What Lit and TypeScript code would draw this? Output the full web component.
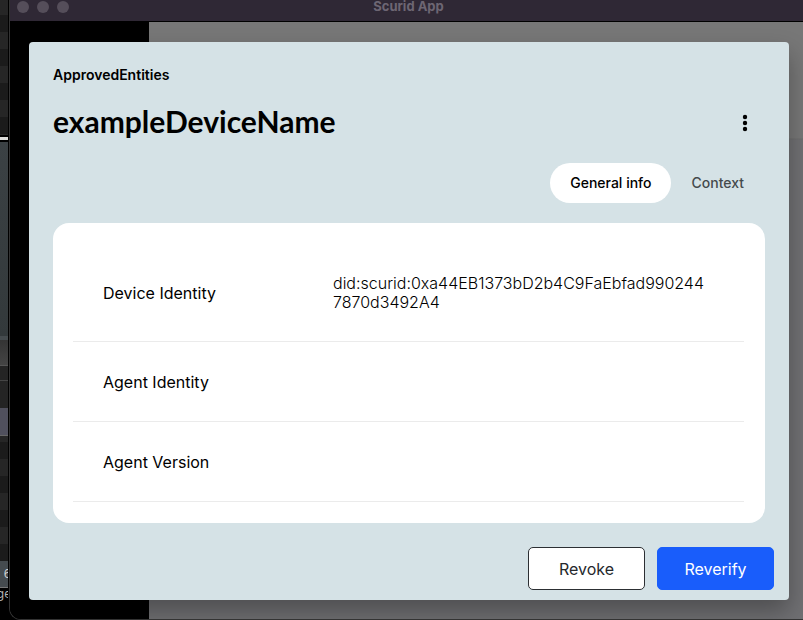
import { LitElement, html, css } from "lit";
import { customElement, property, state } from "lit/decorators.js";
import { classMap } from "lit/directives/class-map.js";

interface Detail {
  label: string;
  value: string;
}

@customElement("desktop-edge")
class DesktopEdge extends LitElement {
  static styles = css`
    :host {
      display: flex;
      flex-direction: column;
      overflow: hidden;
      background: #000;
      color: #b4b4b4;
      font: 12px/16px Inter, sans-serif;
    }
    .list {
      background: linear-gradient(#262626 17px, #1b1b1b 17px);
      background-size: 100% 34px;
    }
    .top {
      height: 135px;
      background-position: 0 -2px;
    }
    .line {
      height: 3px;
      margin-top: 2px;
      background: #dcdcda;
    }
    .slate {
      height: 194px;
      margin-top: 2px;
      background: linear-gradient(#3b4144, #33393b);
    }
    .bar {
      height: 4px;
      background: #454b4e;
    }
    .fade {
      height: 25px;
      background: linear-gradient(#343434, #444);
      border-bottom: 1px solid #555;
    }
    .gap {
      height: 14px;
      background: #242424;
      border-bottom: 1px solid #454545;
    }
    .plain {
      height: 27px;
      background: #242424;
    }
    .selected {
      height: 27px;
      background: #50505d;
      border-bottom: 1px solid #666;
    }
    .bottom {
      flex: 1;
      background-position: 0 -11px;
    }
    .status {
      height: 26px;
      line-height: 26px;
      background: #454b4f;
      color: #d0d0d0;
      border-bottom: 1px solid #777;
    }
    .status,
    .word {
      display: flex;
      justify-content: center;
      white-space: pre;
    }
    .word {
      height: 32px;
      line-height: 12px;
    }
  `;

  render() {
    return html`
      <div class="list top"></div>
      <div class="line"></div>
      <div class="slate"></div>
      <div class="bar"></div>
      <div class="fade"></div>
      <div class="gap"></div>
      <div class="plain"></div>
      <div class="selected"></div>
      <div class="list bottom"></div>
      <div class="status">: 6</div>
      <div class="word">ge</div>
    `;
  }
}

@customElement("entity-dialog")
class EntityDialog extends LitElement {
  @property() heading = "";
  @property() category = "";
  @property({ attribute: false }) details: Detail[] = [];
  @state() private tab = "General info";

  static styles = css`
    :host {
      display: flex;
      flex-direction: column;
      box-sizing: border-box;
      background: #d5e2e6;
      border-radius: 4px;
      box-shadow: 0 12px 24px rgba(0, 0, 0, 0.3);
      color: #000;
      font-family: Inter, sans-serif;
      font-size: 16px;
      line-height: 19px;
    }
    button {
      font: inherit;
      color: inherit;
      border: 0;
      margin: 0;
      cursor: pointer;
    }
    .head {
      padding: 24px 24px 20px;
    }
    .category {
      margin: 0;
      font-size: 14px;
      line-height: 18px;
      font-weight: 600;
    }
    .title {
      display: flex;
      align-items: flex-start;
      justify-content: space-between;
      margin: 19px 0 20px;
    }
    h1 {
      margin: 0;
      font: 700 30px/36px Lato, sans-serif;
    }
    .menu {
      display: flex;
      justify-content: center;
      width: 40px;
      padding: 8px 0;
      background: none;
    }
    .menu svg {
      width: 24px;
      height: 24px;
    }
    .tabs {
      display: flex;
      justify-content: flex-end;
      padding-right: 1px;
    }
    .tab {
      height: 40px;
      padding: 0 20px 2px;
      border-radius: 20px;
      background: none;
      color: #444a4c;
      font-size: 14px;
      font-weight: 500;
    }
    .tab.active {
      background: #fff;
      color: #000;
    }
    .card {
      flex: 1;
      margin: 0 24px;
      padding: 20px 21px 20px 20px;
      border-radius: 16px;
      background: #fff;
    }
    table {
      width: 100%;
      border-collapse: separate;
      border-spacing: 0;
      table-layout: fixed;
    }
    th,
    td {
      height: 19px;
      padding: 31px 30px 29px;
      border-bottom: 1px solid #ebebeb;
      text-align: left;
      vertical-align: middle;
    }
    th {
      width: 200px;
      padding-right: 0;
      font-weight: 400;
    }
    td {
      padding-right: 36px;
      font-weight: 300;
      word-break: break-all;
    }
    .actions {
      display: flex;
      justify-content: flex-end;
      gap: 12px;
      padding: 24px 15px 10px;
    }
    .action {
      padding: 12px 26px 10px;
      border: 1px solid #2c2f33;
      border-radius: 5px;
      background: #fff;
      color: #25282c;
      min-width: 117px;
    }
    .action.primary {
      border-color: #195dfb;
      background: #195dfb;
      color: #fff;
    }
  `;

  private renderTab(name: string) {
    const active = this.tab === name;
    return html`<button
      class=${classMap({ tab: true, active })}
      role="tab"
      aria-selected=${active}
      @click=${() => (this.tab = name)}
    >${name}</button>`;
  }

  render() {
    return html`
      <header class="head">
        <p class="category">${this.category}</p>
        <div class="title">
          <h1>${this.heading}</h1>
          <button class="menu" aria-label="More options">
            <svg viewBox="0 0 24 24" aria-hidden="true">
              <circle cx="12" cy="6" r="2.2" />
              <circle cx="12" cy="12" r="2.2" />
              <circle cx="12" cy="18" r="2.2" />
            </svg>
          </button>
        </div>
        <div class="tabs" role="tablist">
          ${this.renderTab("General info")}${this.renderTab("Context")}
        </div>
      </header>
      <section class="card">
        <table>
          <tbody>
            ${this.details.map(
              (d) => html`<tr>
                <th scope="row">${d.label}</th>
                <td>${d.value}</td>
              </tr>`
            )}
          </tbody>
        </table>
      </section>
      <footer class="actions">
        <button class="action">Revoke</button>
        <button class="action primary">Reverify</button>
      </footer>
    `;
  }
}

@customElement("app-root")
class AppRoot extends LitElement {
  static styles = css`
    :host {
      display: grid;
      grid-template-columns: 8px minmax(0, 1fr);
      min-height: 100vh;
      background: #000;
      font-family: Inter, sans-serif;
    }
    .window {
      display: flex;
      flex-direction: column;
      margin-left: 1px;
      border-left: 1px solid #333;
      border-bottom: 1px solid #333;
      border-bottom-left-radius: 12px;
      overflow: hidden;
    }
    .titlebar {
      display: grid;
      grid-template-columns: 1fr auto 1fr;
      height: 21px;
      padding-left: 4px;
      border-bottom: 1px solid #000;
      background: #2f2835;
    }
    .lights {
      display: flex;
      gap: 8px;
      padding: 1px 3px;
    }
    .light {
      width: 12px;
      height: 12px;
      border-radius: 50%;
      background: #554e5a;
    }
    .name {
      color: #6d6673;
      font-size: 13px;
      font-weight: 700;
      line-height: 13px;
    }
    .body {
      flex: 1;
      display: grid;
      grid-template-columns: 139px minmax(0, 1fr);
    }
    .nav,
    .page,
    entity-dialog {
      grid-row: 1;
    }
    .nav {
      grid-column: 1;
      background: #000;
    }
    .page {
      grid-column: 2;
      background: linear-gradient(#777 116px, #6d6d6d 117px, #707073 118px);
    }
    entity-dialog {
      grid-column: 1 / -1;
      margin: 20px 14px 19px 19px;
    }
  `;

  private details: Detail[] = [
    {
      label: "Device Identity",
      value: "did:scurid:0xa44EB1373bD2b4C9FaEbfad9902447870d3492A4",
    },
    { label: "Agent Identity", value: "" },
    { label: "Agent Version", value: "" },
  ];

  render() {
    return html`
      <desktop-edge></desktop-edge>
      <div class="window">
        <div class="titlebar">
          <div class="lights">
            <span class="light"></span><span class="light"></span><span class="light"></span>
          </div>
          <span class="name">Scurid App</span>
        </div>
        <div class="body">
          <div class="nav"></div>
          <div class="page"></div>
          <entity-dialog
            category="ApprovedEntities"
            heading="exampleDeviceName"
            .details=${this.details}
          ></entity-dialog>
        </div>
      </div>
    `;
  }
}
